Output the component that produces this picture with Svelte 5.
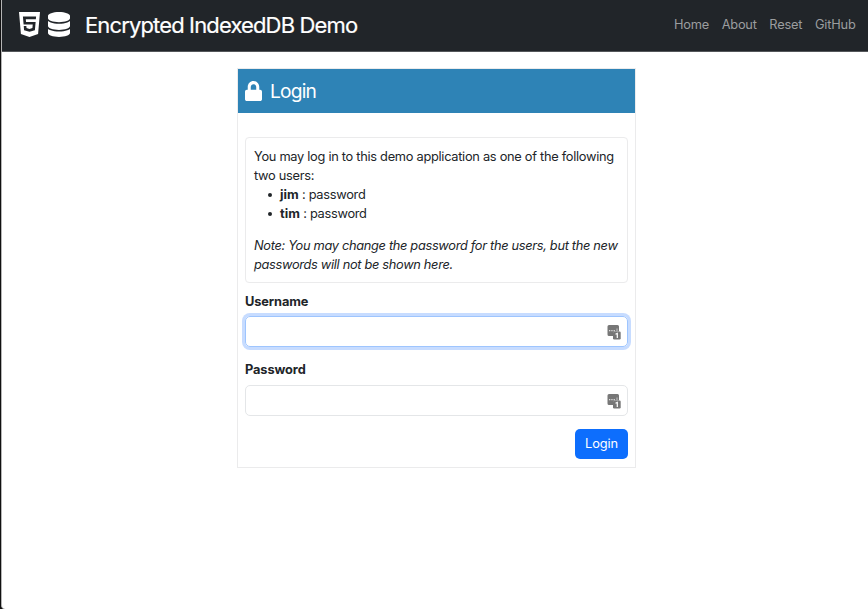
<script>
  const links = [
    { label: 'Home', width: 35 },
    { label: 'About', width: 35 },
    { label: 'Reset', width: 33 },
    { label: 'GitHub', width: 41 }
  ];
  const users = ['jim', 'tim'];
  const fields = [
    { id: 'username', label: 'Username', type: 'text', active: true },
    { id: 'password', label: 'Password', type: 'password', active: false }
  ];
</script>

<div class="window">
  <header>
    <div class="brand">
      <svg class="html5" viewBox="0 32 384 448" preserveAspectRatio="none"><path fill="currentColor" d="M0 32l34.9 395.8L191.5 480l157.6-52.2L384 32H0zm308.2 127.9H124.4l4.1 49.4h175.6l-13.6 148.4-97.9 27v.3h-1.1l-98.7-27.3-6-75.8h47.7L138 320l53.5 14.5 53.7-14.5 6-62.2H84.3L71.5 112.2h241.1l-4.4 47.7z" /></svg>
      <svg class="database" viewBox="0 0 448 512" preserveAspectRatio="none"><path fill="currentColor" d="M448 80v48c0 44.2-100.3 80-224 80S0 172.2 0 128V80C0 35.8 100.3 0 224 0S448 35.8 448 80zM393.2 214.7c20.8-7.4 39.9-16.9 54.8-28.6V288c0 44.2-100.3 80-224 80S0 332.2 0 288V186.1c14.9 11.8 34 21.2 54.8 28.6C99.7 230.7 159.5 240 224 240s124.3-9.3 169.2-25.3zM0 346.1c14.9 11.8 34 21.2 54.8 28.6C99.7 390.7 159.5 400 224 400s124.3-9.3 169.2-25.3c20.8-7.4 39.9-16.9 54.8-28.6V432c0 44.2-100.3 80-224 80S0 476.2 0 432V346.1z" /></svg>
      <span class="title">Encrypted IndexedDB Demo</span>
    </div>
    <nav>
      {#each links as link}
        <a href="#{link.label}" style="width: {link.width}px">{link.label}</a>
      {/each}
    </nav>
  </header>

  <main>
    <section class="card">
      <h1>
        <svg class="lock" viewBox="0 0 448 512" preserveAspectRatio="none"><path fill="currentColor" d="M400 224h-24v-72C376 68.2 307.8 0 224 0S72 68.2 72 152v72H48c-26.5 0-48 21.5-48 48v192c0 26.5 21.5 48 48 48h352c26.5 0 48-21.5 48-48V272c0-26.5-21.500-48-48-48zm-104 0H152v-72c0-39.7 32.3-72 72-72s72 32.3 72 72v72z" /></svg>
        <span>Login</span>
      </h1>
      <div class="body">
        <div class="info">
          <p class="intro">You may log in to this demo application as one of the following<br />two users:</p>
          <ul>
            {#each users as user}
              <li><b>{user}</b> : password</li>
            {/each}
          </ul>
          <p class="note">Note: You may change the password for the users, but the new<br />passwords will not be shown here.</p>
        </div>

        {#each fields as field}
          <label for={field.id}>{field.label}</label>
          <div class="control" class:active={field.active}>
            <input id={field.id} type={field.type} />
            <svg class="manager" viewBox="0 0 14 16">
              <path fill="#777" d="M2 1h8.500q1.500 0 1.500 1.500v5H7.500Q6 7.500 6 9v3H2Q.5 12 .5 10.500V2.500Q.5 1 2 1z" />
              <path fill="#777" d="M7.200 7.500h5.300q1.200 0 1.200 1.200v5.600q0 1.200-1.200 1.200H7.200q-1.200 0-1.200-1.200V8.700q0-1.200 1.200-1.200z" />
              <path fill="#ddd" d="M2 6h1.300v1.300H2zM4.300 6h1.300v1.300H4.300zM6.600 6h1.300v1.300H6.600zM9.600 4.500h.8v2.800h-.8z" />
              <path fill="none" stroke="#fff" stroke-width="1.200" d="M8.500 10.300l1.800-.8v4.600" />
            </svg>
          </div>
        {/each}

        <div class="actions"><button type="button">Login</button></div>
      </div>
    </section>
  </main>
</div>

<style>
  :global(body) {
    background: #111;
    overflow: hidden;
  }
  * {
    box-sizing: border-box;
  }
  .window {
    height: 609px;
    border-left: 1px solid #b5b5b5;
    margin-left: 1px;
    border-bottom-left-radius: 4px;
    background: #fff;
    color: #212529;
    font: 12.8px/19.2px Inter, "Liberation Sans", sans-serif;
    overflow: hidden;
  }
  header {
    height: 52px;
    margin-left: -1px;
    border-left: 1px solid #4b4e51;
    border-bottom: 1px solid #54575a;
    background: #212529;
    display: flex;
    align-items: center;
    justify-content: space-between;
    padding: 0 12px 2px 17px;
  }
  .brand {
    display: flex;
    align-items: center;
    color: #fff;
  }
  svg {
    display: block;
    flex: none;
  }
  .html5 {
    width: 21px;
    height: 25px;
  }
  .database {
    width: 22px;
    height: 25px;
    margin: 0 15px 0 8px;
  }
  .title {
    font-size: 22px;
    line-height: 30px;
    letter-spacing: -0.86px;
    white-space: nowrap;
    -webkit-text-stroke: 0.2px currentColor;
  }
  nav {
    display: flex;
    gap: 12.7px;
  }
  nav a {
    color: #9b9d9f;
    text-decoration: none;
    letter-spacing: -0.2px;
    white-space: nowrap;
  }
  main {
    display: flex;
    padding: 16px 0 0 235px;
  }
  .card {
    width: 399px;
    height: 400px;
    border: 1px solid #ebebec;
  }
  h1 {
    margin: 0;
    height: 44px;
    padding: 0 7px;
    background: #2e83b6;
    color: #fff;
    display: flex;
    align-items: center;
    gap: 8px;
    font-size: 19.2px;
    line-height: 24px;
    font-weight: 400;
    letter-spacing: -0.8px;
  }
  .lock {
    width: 17px;
    height: 20px;
  }
  .body {
    padding: 24px 7px 0;
  }
  .info {
    height: 146px;
    border: 1px solid #ebebec;
    border-radius: 4px;
    padding: 9px 8px;
    margin-bottom: 9px;
    white-space: nowrap;
    letter-spacing: -0.28px;
  }
  p, ul {
    margin: 0;
  }
  ul {
    padding-left: 13px;
    margin-bottom: 12.6px;
    list-style: none;
  }
  li {
    display: flex;
    align-items: center;
    white-space: pre;
    height: 19px;
  }
  li::before {
    content: "";
    width: 4px;
    height: 4px;
    margin: 1px 8px 0 1px;
    border-radius: 50%;
    background: currentColor;
  }
  b {
    letter-spacing: 0;
  }
  .note {
    font-style: italic;
    letter-spacing: -0.31px;
  }
  label {
    display: block;
    font-weight: 700;
    height: 19px;
    margin-bottom: 5px;
    letter-spacing: -0.1px;
  }
  .control {
    height: 31px;
    border: 1px solid #e4e6e8;
    border-radius: 5px;
    display: flex;
    align-items: center;
    padding-right: 6px;
    margin-bottom: 13px;
  }
  .control.active {
    border-color: #9ec5fe;
    box-shadow: 0 0 0 3px #c7dcff;
  }
  .control.active + label {
    margin-bottom: 6px;
  }
  input {
    flex: 1;
    min-width: 0;
    border: 0;
    outline: 0;
    background: none;
    padding: 4px 9px;
    font: inherit;
  }
  .manager {
    width: 14px;
    height: 16px;
  }
  .actions {
    display: flex;
    justify-content: flex-end;
  }
  button {
    width: 53px;
    height: 30px;
    padding: 0;
    border: 0;
    border-radius: 5px;
    background: #0d6efd;
    color: #fff;
    font: inherit;
    letter-spacing: -0.1px;
  }
</style>
